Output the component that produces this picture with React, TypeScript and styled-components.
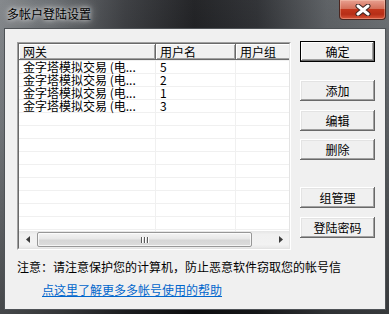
import React from 'react'
import styled, { createGlobalStyle, css } from 'styled-components'

const FONT = `"Noto Sans CJK SC", "Noto Sans", "Liberation Sans", sans-serif`

const GlobalStyle = createGlobalStyle`
  html, body {
    margin: 0;
    padding: 0;
    background: #1c1d20;
  }
  body {
    font-family: ${FONT};
    font-size: 12px;
  }
`

interface RowItem {
  gateway: string
  user: string
  group: string
}

const rows: RowItem[] = [
  { gateway: '金字塔模拟交易 (电...', user: '5', group: '' },
  { gateway: '金字塔模拟交易 (电...', user: '2', group: '' },
  { gateway: '金字塔模拟交易 (电...', user: '1', group: '' },
  { gateway: '金字塔模拟交易 (电...', user: '3', group: '' },
]

const columns = [
  { title: '网关', width: 137 },
  { title: '用户名', width: 80 },
  { title: '用户组', width: 80 },
]

const EMPTY_ROWS = 14

const CloseGlyph: React.FC = () => (
  <svg width="16" height="12" viewBox="0 0 16 12">
    <path d="M3 2 L13 10 M13 2 L3 10" stroke="#3a2320" strokeWidth="5" strokeLinecap="round" />
    <path d="M3 2 L13 10 M13 2 L3 10" stroke="#ffffff" strokeWidth="3" strokeLinecap="round" />
  </svg>
)

const ArrowLeft: React.FC = () => (
  <svg width="4" height="7" viewBox="0 0 4 7">
    <path d="M4 0 L0 3.5 L4 7 Z" fill="#3b3b3b" />
  </svg>
)

const ArrowRight: React.FC = () => (
  <svg width="4" height="7" viewBox="0 0 4 7">
    <path d="M0 0 L4 3.5 L0 7 Z" fill="#3b3b3b" />
  </svg>
)

const App: React.FC = () => {
  return (
    <>
      <GlobalStyle />
      <Window>
        <TitleBar>
          <TitleText>多帐户登陆设置</TitleText>
          <CloseButton>
            <CloseGlyph />
          </CloseButton>
        </TitleBar>
        <Client>
          <MainRow>
            <ListFrame>
              <ListInner>
                <Header>
                  {columns.map((c) => (
                    <HeaderCell key={c.title} $width={c.width}>
                      {c.title}
                    </HeaderCell>
                  ))}
                </Header>
                <ListBody>
                  {Array.from({ length: EMPTY_ROWS }).map((_, i) => {
                    const item = rows[i]
                    return (
                      <Row key={i}>
                        <Cell $width={columns[0].width}>{item?.gateway}</Cell>
                        <Cell $width={columns[1].width}>{item?.user}</Cell>
                        <Cell $width={columns[2].width}>{item?.group}</Cell>
                      </Row>
                    )
                  })}
                </ListBody>
                <HScroll>
                  <ScrollArrow>
                    <ArrowLeft />
                  </ScrollArrow>
                  <Thumb>
                    <Grip />
                    <Grip />
                    <Grip />
                  </Thumb>
                  <Track />
                  <ScrollArrow>
                    <ArrowRight />
                  </ScrollArrow>
                </HScroll>
              </ListInner>
            </ListFrame>
            <ButtonColumn>
              <DlgButton $default>确定</DlgButton>
              <DlgButton $gap={18}>添加</DlgButton>
              <DlgButton $gap={9}>编辑</DlgButton>
              <DlgButton $gap={8}>删除</DlgButton>
              <DlgButton $gap={27}>组管理</DlgButton>
              <DlgButton $gap={9}>登陆密码</DlgButton>
            </ButtonColumn>
          </MainRow>
          <Notice>注意：请注意保护您的计算机，防止恶意软件窃取您的帐号信</Notice>
          <HelpLink href="#">点这里了解更多多帐号使用的帮助</HelpLink>
        </Client>
      </Window>
    </>
  )
}

const Window = styled.div`
  width: 389px;
  height: 314px;
  box-sizing: border-box;
  display: flex;
  flex-direction: column;
  background:
    linear-gradient(180deg, rgba(255, 255, 255, 0.06) 0%, rgba(0, 0, 0, 0.1) 40%, rgba(0, 0, 0, 0.45) 100%),
    linear-gradient(90deg, #7e8286 0%, #5d6165 16%, #34363a 32%, #17181b 50%, #26282c 66%, #55595d 84%, #64686c 100%);
`

const TitleBar = styled.div`
  height: 28px;
  display: flex;
  align-items: flex-start;
  justify-content: space-between;
  padding-left: 7px;
`

const TitleText = styled.div`
  font-family: ${FONT};
  font-size: 12px;
  line-height: 28px;
  color: #000;
  text-shadow: 0 0 4px rgba(255, 255, 255, 0.85), 0 0 9px rgba(255, 255, 255, 0.6), 0 0 14px rgba(255, 255, 255, 0.4);
`

const CloseButton = styled.div`
  width: 47px;
  height: 20px;
  box-sizing: border-box;
  margin-right: 3px;
  display: flex;
  align-items: center;
  justify-content: center;
  border: 1px solid #4a2620;
  border-top: none;
  border-radius: 0 0 4px 4px;
  background: linear-gradient(180deg, #e8a090 0%, #d4705a 45%, #c2361c 50%, #b62e17 75%, #d8553a 100%);
  box-shadow: inset 0 0 0 1px rgba(255, 220, 200, 0.35);
`

const Client = styled.div`
  flex: 1;
  margin: 0 3px 4px 4px;
  border: 1px solid #4e5256;
  background: #f0f0f0;
  padding: 12px 0 0 12px;
  display: flex;
  flex-direction: column;
  align-items: flex-start;
  overflow: hidden;
`

const MainRow = styled.div`
  display: flex;
  align-items: flex-start;
  gap: 9px;
`

const ListFrame = styled.div`
  width: 274px;
  height: 208px;
  margin-top: 1px;
  box-sizing: border-box;
  border: 1px solid;
  border-color: #a0a0a0 #ffffff #ffffff #a0a0a0;
`

const ListInner = styled.div`
  height: 100%;
  box-sizing: border-box;
  border: 1px solid;
  border-color: #696969 #e3e3e3 #e3e3e3 #696969;
  background: #ffffff;
  display: flex;
  flex-direction: column;
  overflow: hidden;
`

const Header = styled.div`
  display: flex;
  height: 16px;
  flex-shrink: 0;
  background: #f0f0f0;
`

const HeaderCell = styled.div<{ $width: number }>`
  width: ${(p) => p.$width}px;
  flex-shrink: 0;
  box-sizing: border-box;
  padding-left: 4px;
  font-size: 12px;
  line-height: 15px;
  color: #000;
  white-space: nowrap;
  background: #f0f0f0;
  box-shadow: inset -1px -1px #696969, inset 1px 1px #ffffff, inset -2px -2px #a0a0a0;
`

const ListBody = styled.div`
  flex: 1;
  overflow: hidden;
`

const Row = styled.div`
  display: flex;
  height: 13px;
  box-sizing: border-box;
  border-top: 1px solid #f0f0f0;
`

const Cell = styled.div<{ $width: number }>`
  width: ${(p) => p.$width}px;
  flex-shrink: 0;
  box-sizing: border-box;
  padding-left: 4px;
  border-right: 1px solid #f0f0f0;
  font-size: 12px;
  line-height: 12px;
  color: #000;
  white-space: nowrap;
`

const HScroll = styled.div`
  height: 17px;
  flex-shrink: 0;
  display: flex;
  align-items: stretch;
  background: linear-gradient(180deg, #e5e5e5 0%, #f0f0f0 20%, #f2f2f2 80%, #e8e8e8 100%);
`

const ScrollArrow = styled.div`
  width: 17px;
  flex-shrink: 0;
  display: flex;
  align-items: center;
  justify-content: center;
`

const Thumb = styled.div`
  width: 215px;
  margin: 1px 0 1px 1px;
  box-sizing: border-box;
  border: 1px solid #979797;
  border-radius: 2px;
  display: flex;
  align-items: center;
  justify-content: center;
  gap: 2px;
  background: linear-gradient(180deg, #f4f4f4 0%, #e8e8e8 45%, #d6d6d6 55%, #dcdcdc 100%);
  box-shadow: inset 0 0 0 1px rgba(255, 255, 255, 0.7);
`

const Grip = styled.div`
  width: 1px;
  height: 6px;
  background: #5a5a5a;
  box-shadow: 1px 0 #ffffff;
`

const Track = styled.div`
  flex: 1;
`

const ButtonColumn = styled.div`
  width: 75px;
  display: flex;
  flex-direction: column;
`

const DlgButton = styled.div<{ $default?: boolean; $gap?: number }>`
  height: 21px;
  margin-top: ${(p) => p.$gap ?? 0}px;
  box-sizing: border-box;
  display: flex;
  align-items: center;
  justify-content: center;
  font-family: ${FONT};
  font-size: 12px;
  color: #000;
  background: #f0f0f0;
  box-shadow: inset -1px -1px #696969, inset 1px 1px #ffffff, inset -2px -2px #a0a0a0, inset 2px 2px #e3e3e3;
  ${(p) =>
    p.$default &&
    css`
      box-shadow: inset 0 0 0 1px #000000, inset -2px -2px #696969, inset 2px 2px #ffffff, inset -3px -3px #a0a0a0;
    `}
`

const Notice = styled.div`
  margin-top: 11px;
  font-size: 12px;
  line-height: 12px;
  color: #000;
  white-space: nowrap;
`

const HelpLink = styled.a`
  margin-top: 11px;
  margin-left: 25px;
  font-size: 12px;
  line-height: 12px;
  color: #0066cc;
  text-decoration: underline;
  white-space: nowrap;
`

export default App
